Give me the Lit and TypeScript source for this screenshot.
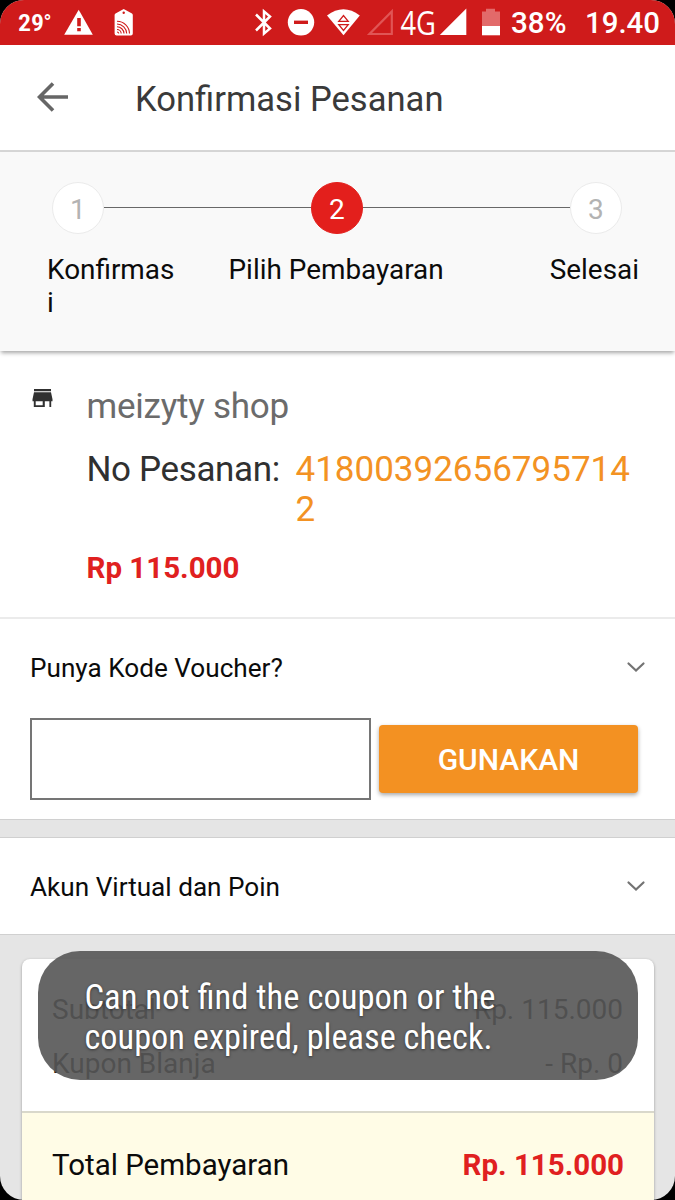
import { LitElement, html, css, svg } from "lit";
import { customElement, property } from "lit/decorators.js";

@customElement("status-bar")
class StatusBar extends LitElement {
  static styles = css`
    :host { display: flex; height: 45px; background: #cf1b1b; color: #fff; }
    svg { display: block; width: 675px; height: 45px; }
    text { font-family: Roboto, sans-serif; fill: #fff; }
    .temp { font-family: "Roboto Condensed", Roboto, sans-serif; font-size: 24.500px; font-weight: 600; }
    .deg { font-size: 24px; font-weight: 500; }
    .net { font-family: "Open Sans", sans-serif; font-size: 33px; }
    .num { font-size: 29px; font-weight: 500; }
  `;
  render() {
    return html`<svg viewBox="0 0 675 45" fill="#fff">
      <text class="temp" x="18" y="31" textLength="26" lengthAdjust="spacingAndGlyphs">29</text>
      <text class="deg" x="43.500" y="31" textLength="8" lengthAdjust="spacingAndGlyphs">°</text>
      <path d="M78.7 9.8 92.8 34.8H64.2Z"/>
      <path fill="#cf1b1b" d="M77.2 18h3.6v8.3h-3.6zM77.2 28h3.6v3.3h-3.6z"/>
      <path d="M115.5 13.5 123.7 9l8.3 4.5q.8.5.8 1.5v18.500q0 2-2 2h-14.200q-2 0-2-2V15q0-1 .9-1.500z"/>
      <circle cx="123.700" cy="12.700" r="1.200" fill="#cf1b1b"/>
      <g fill="none" stroke="#cf1b1b" stroke-width="1.100">
        <path d="M117 21.200A12.500 12.500 0 0 1 129.500 33.500M117 24A9.700 9.700 0 0 1 126.700 33.500M117 26.800A7 7 0 0 1 124 33.500M117 29.500A4.200 4.200 0 0 1 121.200 33.500M117 32A1.800 1.800 0 0 1 118.800 33.500"/>
      </g>
      <path fill="none" stroke="#fff" stroke-width="2.500" d="M256 14.500 270 28.500 264 33.600V11.400L270 16.500 256 30.500"/>
      <circle cx="301" cy="22.300" r="13.200"/>
      <path fill="#cf1b1b" d="M294 20.600h14v3.400h-14z"/>
      <path d="M327 15.500Q343.500 3 359.800 15.500L343.500 35.300Z"/>
      <path fill="none" stroke="#cf1b1b" stroke-width="1.300" d="M338.800 21.300h9.400L343.500 15.600zM338.800 24.700h9.400L343.500 30.400z"/>
      <path fill="none" stroke="#e05555" stroke-width="2.200" d="M391.800 11.500V34H369.500Z"/>
      <text class="net" x="400.500" y="34.600" textLength="35.500" lengthAdjust="spacingAndGlyphs">4G</text>
      <path d="M466.300 8.500V35H439.800Z"/>
      <path fill="#e26a6a" d="M482 11.500h4V8.800h9v2.700h5V26h-18z"/>
      <path d="M482 26h18v9.300h-18z"/>
      <text class="num" x="511" y="33.300" textLength="55.500" lengthAdjust="spacingAndGlyphs">38%</text>
      <text class="num" x="585" y="33.300" textLength="75" lengthAdjust="spacingAndGlyphs">19.40</text>
    </svg>`;
  }
}

@customElement("step-track")
class StepTrack extends LitElement {
  static styles = css`
    :host { display: block; box-sizing: border-box; height: 199px; margin-bottom: 1px; padding-top: 30px; background: #f9f9f9; box-shadow: 0 3px 4px -1px rgba(0,0,0,.35); color: #0b0b0b; }
    .track { display: flex; align-items: center; padding: 0 53px 0 51.500px; height: 52px; }
    .dot { box-sizing: border-box; flex: none; width: 52.500px; height: 52.500px; border-radius: 50%; border: 1.500px solid #ebebeb; background: #fff; color: #b3b3b3; font-size: 28px; line-height: 54px; text-align: center; }
    .on { background: #e31f1c; border-color: #e31f1c; color: #fff; }
    .line { flex: 1; height: 1px; margin-top: -1px; background: #686868; }
    .labels { display: flex; margin-top: 19px; padding: 0 36px 0 47px; font-size: 27.900px; line-height: 33px; white-space: nowrap; }
    .a { width: 130px; margin-right: 51.500px; white-space: normal; word-break: break-all; }
    .c { margin-left: auto; }
  `;
  render() {
    return html`
      <div class="track">
        <div class="dot">1</div><div class="line"></div>
        <div class="dot on">2</div><div class="line"></div>
        <div class="dot">3</div>
      </div>
      <div class="labels">
        <div class="a">Konfirmasi</div><div class="b">Pilih Pembayaran</div><div class="c">Selesai</div>
      </div>`;
  }
}

@customElement("fold-row")
class FoldRow extends LitElement {
  @property() label = "";
  static styles = css`
    :host { display: flex; align-items: center; justify-content: space-between; height: 98px; padding: 0 29px 0 30px; font-size: 26.150px; color: #0b0b0b; }
    svg { width: 20px; height: 12px; margin-bottom: 2px; }
  `;
  render() {
    return html`<span>${this.label}</span>
      <svg viewBox="0 0 20 12"><path d="M2.500 2.500 10 9.500 17.500 2.500" fill="none" stroke="#737373" stroke-width="2.200" stroke-linecap="round"/></svg>`;
  }
}

const shopIcon = svg`<path d="M1.500 0h17v2.300h-17zM1.500 3.300h17l1.500 7v2h-1.300V18h-1.800v-5.700h-4.600V18H1.300v-5.700H0v-2zM3.200 12.300v3.900h7v-3.900z" fill-rule="evenodd"/>`;

@customElement("app-root")
class AppRoot extends LitElement {
  static styles = css`
    :host { display: block; width: 675px; height: 1200px; background: #000; font-family: Roboto, sans-serif; }
    .screen { position: relative; height: 1200px; overflow: hidden; border-radius: 24px; background: #e5e5e5; display: flex; flex-direction: column; }
    .screen > * { flex: none; }
    header { box-sizing: border-box; height: 107px; display: flex; align-items: center; padding: 2px 0 0 37px; background: #fff; border-bottom: 2px solid #d6d6d6; color: #3a3a3a; font-size: 34.600px; }
    header svg { width: 31px; height: 30px; margin: 0 67px 3px 0; }
    header span { padding-top: 1px; }
    step-track { z-index: 1; }
    .shop { box-sizing: border-box; height: 268px; margin-top: -1px; display: flex; padding: 36px 30px 0 32px; background: #fff; border-bottom: 2px solid #ebebeb; font-size: 35px; line-height: 40px; color: #303030; }
    .shop svg { width: 21px; height: 18px; margin: 2px 33.500px 0 0; fill: #303030; }
    .info { flex: 1; }
    .name { color: #6b6b6b; letter-spacing: -.24px; }
    .order { display: flex; margin-top: 23px; }
    .label { width: 209px; flex: none; letter-spacing: -.36px; }
    .no { width: 340px; word-break: break-all; color: #f39223; }
    .price { margin-top: 18px; font-size: 29.500px; font-weight: 700; color: #e02020; }
    .voucher { box-sizing: border-box; height: 201px; background: #fff; border-bottom: 1px solid #d0d0d0; }
    .entry { display: flex; align-items: center; gap: 8px; padding: 1px 0 0 30px; }
    .field { box-sizing: border-box; width: 341px; height: 82px; border: 2px solid #757575; background: #fff; border-radius: 0; padding: 0; }
    .use { width: 259px; height: 68px; border: 0; border-radius: 4px; background: #f39122; box-shadow: 0 2px 4px rgba(0,0,0,.35); color: #fff; font: 500 30px Roboto, sans-serif; padding: 0; }
    .account { margin-top: 17px; height: 96px; background: #fff; border-top: 1px solid #d0d0d0; border-bottom: 1px solid #d0d0d0; }
    .account fold-row { height: 97px; }
    .card { box-sizing: border-box; height: 260px; margin: 24px 21px 0 22px; border-radius: 8px; background: #fff; box-shadow: 0 1px 3px rgba(0,0,0,.35); font-size: 28px; overflow: hidden; }
    .rows { box-sizing: border-box; height: 154px; padding: 24px 31px 0 30px; line-height: 54px; border-bottom: 2px solid #d9d8cb; color: #222; }
    .row { display: flex; justify-content: space-between; }
    .total { height: 108px; padding: 0 30px; line-height: 104px; background: #fffce6; color: #0b0b0b; font-size: 29.500px; }
    .sum { color: #e02020; font-weight: 700; }
    .toast { position: absolute; z-index: 2; left: 37.500px; top: 950.500px; width: 600px; height: 129px; border-radius: 42px; background: rgba(85,85,85,.9); }
    .toast svg { display: block; width: 600px; height: 129px; }
    .toast text { fill: #fff; font-family: "Roboto Condensed", Roboto, sans-serif; font-size: 35px; text-shadow: 0 1px 3px rgba(0,0,0,.5); }
  `;
  render() {
    return html`<div class="screen">
      <status-bar></status-bar>
      <header>
        <svg viewBox="0 0 31 30"><path d="M31 15H3M16 1.500 2.500 15 16 28.500" fill="none" stroke="#666" stroke-width="3.600"/></svg>
        <span>Konfirmasi Pesanan</span>
      </header>
      <step-track></step-track>
      <section class="shop">
        <svg viewBox="0 0 20 18">${shopIcon}</svg>
        <div class="info">
          <div class="name">meizyty shop</div>
          <div class="order"><span class="label">No Pesanan:</span><span class="no">418003926567957142</span></div>
          <div class="price">Rp 115.000</div>
        </div>
      </section>
      <section class="voucher">
        <fold-row label="Punya Kode Voucher?"></fold-row>
        <div class="entry"><input class="field" type="text" /><button class="use">GUNAKAN</button></div>
      </section>
      <section class="account"><fold-row label="Akun Virtual dan Poin"></fold-row></section>
      <section class="card">
        <div class="rows">
          <div class="row"><span>Subtotal</span><span>Rp. 115.000</span></div>
          <div class="row"><span>Kupon Blanja</span><span>- Rp. 0</span></div>
        </div>
        <div class="row total"><span>Total Pembayaran</span><span class="sum">Rp. 115.000</span></div>
      </section>
      <div class="toast">
        <svg viewBox="0 0 600 129">
          <text x="46.500" y="57.800" textLength="411" lengthAdjust="spacingAndGlyphs">Can not find the coupon or the</text>
          <text x="46.500" y="98.200" textLength="408" lengthAdjust="spacingAndGlyphs">coupon expired, please check.</text>
        </svg>
      </div>
    </div>`;
  }
}
